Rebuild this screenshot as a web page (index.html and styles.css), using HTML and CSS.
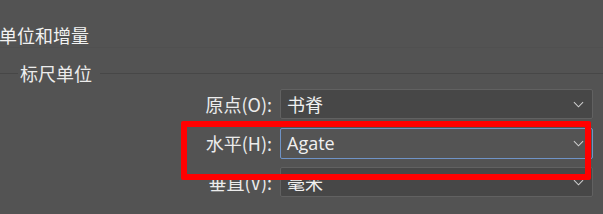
FILE: index.html
```html
<!DOCTYPE html>
<html lang="zh-CN">
<head>
<meta charset="utf-8">
<link rel="stylesheet" href="styles.css">
</head>
<body>
<div class="page">
  <div class="section-title">单位和增量</div>
  <div class="group">
    <div class="group-title"><span class="legend">标尺单位</span></div>
    <div class="rows">
      <div class="row">
        <label class="label">原点(O):</label>
        <div class="select"><span class="value">书脊</span><svg class="chev" viewBox="0 0 12 7"><path d="M1 1 L6 6 L11 1"/></svg></div>
      </div>
      <div class="row">
        <label class="label">水平(H):</label>
        <div class="select focused"><span class="value latin">Agate</span><svg class="chev" viewBox="0 0 12 7"><path d="M1 1 L6 6 L11 1"/></svg></div>
      </div>
      <div class="row">
        <label class="label">垂直(V):</label>
        <div class="select"><span class="value">毫米</span><svg class="chev" viewBox="0 0 12 7"><path d="M1 1 L6 6 L11 1"/></svg></div>
      </div>
    </div>
  </div>
  <div class="highlight"></div>
</div>
</body>
</html>
```
FILE: styles.css
```css
html, body {
  margin: 0;
  padding: 0;
  background: #535353;
}
.page {
  position: relative;
  width: 603px;
  height: 214px;
  overflow: hidden;
  font-family: "Noto Sans CJK SC", "Noto Sans", sans-serif;
  color: #ececec;
  font-size: 18px;
}
.section-title {
  padding-top: 23px;
  line-height: 24px;
  margin-left: -1px;
  border-bottom: 1px solid #505050;
  color: #f2f2f2;
}
.group-title {
  display: flex;
  align-items: center;
  margin-top: 13px;
  margin-bottom: 4px;
  line-height: 24px;
}
.group-title::before {
  content: "";
  width: 18px;
  height: 1px;
  background: #474747;
}
.group-title::after {
  content: "";
  flex: 1;
  height: 1px;
  background: #474747;
  margin-left: 8px;
}
.legend {
  padding-left: 2px;
  color: #ececec;
}
.rows {
  display: flex;
  flex-direction: column;
  gap: 9px;
}
.row {
  display: flex;
  align-items: center;
  gap: 8px;
  height: 30px;
}
.label {
  width: 272px;
  text-align: right;
  color: #ececec;
}
.select {
  box-sizing: border-box;
  width: 313px;
  height: 30px;
  display: flex;
  align-items: center;
  justify-content: space-between;
  padding: 0 8px 0 6px;
  background: #474747;
  border: 1px solid #616161;
  border-radius: 2px;
}
.select.focused {
  height: 31px;
  background: #545454;
  border-color: #6f93c6;
}
.value {
  line-height: 24px;
  color: #f0f0f0;
}
.value.latin {
  font-family: "Open Sans", "Noto Sans", sans-serif;
}
.chev {
  width: 11px;
  height: 7px;
  fill: none;
  stroke: #cfcfcf;
  stroke-width: 1.1;
}
.highlight {
  position: absolute;
  left: 181px;
  top: 121px;
  width: 398px;
  height: 47px;
  border: 6px solid #ff0000;
  border-radius: 2px;
}
```
